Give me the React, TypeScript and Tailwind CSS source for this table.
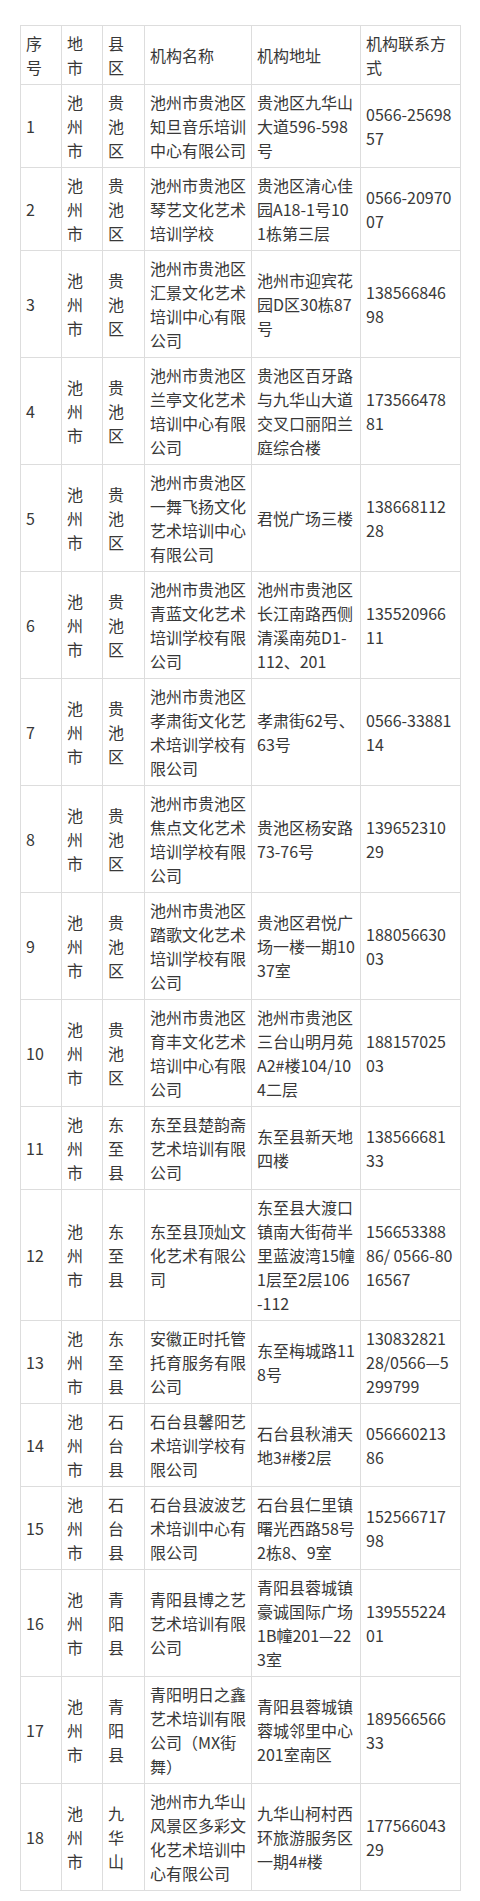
import React from "react";

type Row = {
  no: string;
  city: string;
  county: string;
  name: string[];
  address: string[];
  phone: string[];
};

const rows: Row[] = [
  { no: "1", city: "池州市", county: "贵池区", name: ["池州市贵池区", "知旦音乐培训", "中心有限公司"], address: ["贵池区九华山", "大道596-598", "号"], phone: ["0566-25698", "57"] },
  { no: "2", city: "池州市", county: "贵池区", name: ["池州市贵池区", "琴艺文化艺术", "培训学校"], address: ["贵池区清心佳", "园A18-1号10", "1栋第三层"], phone: ["0566-20970", "07"] },
  { no: "3", city: "池州市", county: "贵池区", name: ["池州市贵池区", "汇景文化艺术", "培训中心有限", "公司"], address: ["池州市迎宾花", "园D区30栋87", "号"], phone: ["138566846", "98"] },
  { no: "4", city: "池州市", county: "贵池区", name: ["池州市贵池区", "兰亭文化艺术", "培训中心有限", "公司"], address: ["贵池区百牙路", "与九华山大道", "交叉口丽阳兰", "庭综合楼"], phone: ["173566478", "81"] },
  { no: "5", city: "池州市", county: "贵池区", name: ["池州市贵池区", "一舞飞扬文化", "艺术培训中心", "有限公司"], address: ["君悦广场三楼"], phone: ["138668112", "28"] },
  { no: "6", city: "池州市", county: "贵池区", name: ["池州市贵池区", "青蓝文化艺术", "培训学校有限", "公司"], address: ["池州市贵池区", "长江南路西侧", "清溪南苑D1-", "112、201"], phone: ["135520966", "11"] },
  { no: "7", city: "池州市", county: "贵池区", name: ["池州市贵池区", "孝肃街文化艺", "术培训学校有", "限公司"], address: ["孝肃街62号、", "63号"], phone: ["0566-33881", "14"] },
  { no: "8", city: "池州市", county: "贵池区", name: ["池州市贵池区", "焦点文化艺术", "培训学校有限", "公司"], address: ["贵池区杨安路", "73-76号"], phone: ["139652310", "29"] },
  { no: "9", city: "池州市", county: "贵池区", name: ["池州市贵池区", "踏歌文化艺术", "培训学校有限", "公司"], address: ["贵池区君悦广", "场一楼一期10", "37室"], phone: ["188056630", "03"] },
  { no: "10", city: "池州市", county: "贵池区", name: ["池州市贵池区", "育丰文化艺术", "培训中心有限", "公司"], address: ["池州市贵池区", "三台山明月苑", "A2#楼104/10", "4二层"], phone: ["188157025", "03"] },
  { no: "11", city: "池州市", county: "东至县", name: ["东至县楚韵斋", "艺术培训有限", "公司"], address: ["东至县新天地", "四楼"], phone: ["138566681", "33"] },
  { no: "12", city: "池州市", county: "东至县", name: ["东至县顶灿文", "化艺术有限公", "司"], address: ["东至县大渡口", "镇南大街荷半", "里蓝波湾15幢", "1层至2层106", "-112"], phone: ["156653388", "86/ 0566-80", "16567"] },
  { no: "13", city: "池州市", county: "东至县", name: ["安徽正时托管", "托育服务有限", "公司"], address: ["东至梅城路11", "8号"], phone: ["130832821", "28/0566—5", "299799"] },
  { no: "14", city: "池州市", county: "石台县", name: ["石台县馨阳艺", "术培训学校有", "限公司"], address: ["石台县秋浦天", "地3#楼2层"], phone: ["056660213", "86"] },
  { no: "15", city: "池州市", county: "石台县", name: ["石台县波波艺", "术培训中心有", "限公司"], address: ["石台县仁里镇", "曙光西路58号", "2栋8、9室"], phone: ["152566717", "98"] },
  { no: "16", city: "池州市", county: "青阳县", name: ["青阳县博之艺", "艺术培训有限", "公司"], address: ["青阳县蓉城镇", "豪诚国际广场", "1B幢201—22", "3室"], phone: ["139555224", "01"] },
  { no: "17", city: "池州市", county: "青阳县", name: ["青阳明日之鑫", "艺术培训有限", "公司（MX街", "舞）"], address: ["青阳县蓉城镇", "蓉城邻里中心", "201室南区"], phone: ["189566566", "33"] },
  { no: "18", city: "池州市", county: "九华山", name: ["池州市九华山", "风景区多彩文", "化艺术培训中", "心有限公司"], address: ["九华山柯村西", "环旅游服务区", "一期4#楼"], phone: ["177566043", "29"] },
];

const Lines = ({ lines }: { lines: string[] }) => (
  <>
    {lines.map((l, i) => (
      <span key={i} className="block whitespace-nowrap">
        {l}
      </span>
    ))}
  </>
);

const cell = "border border-[#dddddd] pl-[5px] pr-[4px] py-[5px] align-middle text-left font-normal";

export default function App() {
  return (
    <div className="min-h-[1901px] w-[480px] bg-white pt-[25px] pl-[20px] font-['Noto_Sans_CJK_SC',sans-serif] text-[16px] leading-[24px] text-[#383838]">
      <table className="w-[440px] table-fixed border-collapse">
        <colgroup>
          <col className="w-[41px]" />
          <col className="w-[41px]" />
          <col className="w-[42px]" />
          <col className="w-[107px]" />
          <col className="w-[109px]" />
          <col className="w-[100px]" />
        </colgroup>
        <thead>
          <tr>
            <th className={cell}>
              <Lines lines={["序", "号"]} />
            </th>
            <th className={cell}>
              <Lines lines={["地", "市"]} />
            </th>
            <th className={cell}>
              <Lines lines={["县", "区"]} />
            </th>
            <th className={cell}>机构名称</th>
            <th className={cell}>机构地址</th>
            <th className={cell}>
              <Lines lines={["机构联系方", "式"]} />
            </th>
          </tr>
        </thead>
        <tbody>
          {rows.map((r) => (
            <tr key={r.no}>
              <td className={cell}>{r.no}</td>
              <td className={cell}>
                <Lines lines={r.city.split("")} />
              </td>
              <td className={cell}>
                <Lines lines={r.county.split("")} />
              </td>
              <td className={cell}>
                <Lines lines={r.name} />
              </td>
              <td className={cell}>
                <Lines lines={r.address} />
              </td>
              <td className={cell}>
                <Lines lines={r.phone} />
              </td>
            </tr>
          ))}
        </tbody>
      </table>
    </div>
  );
}
